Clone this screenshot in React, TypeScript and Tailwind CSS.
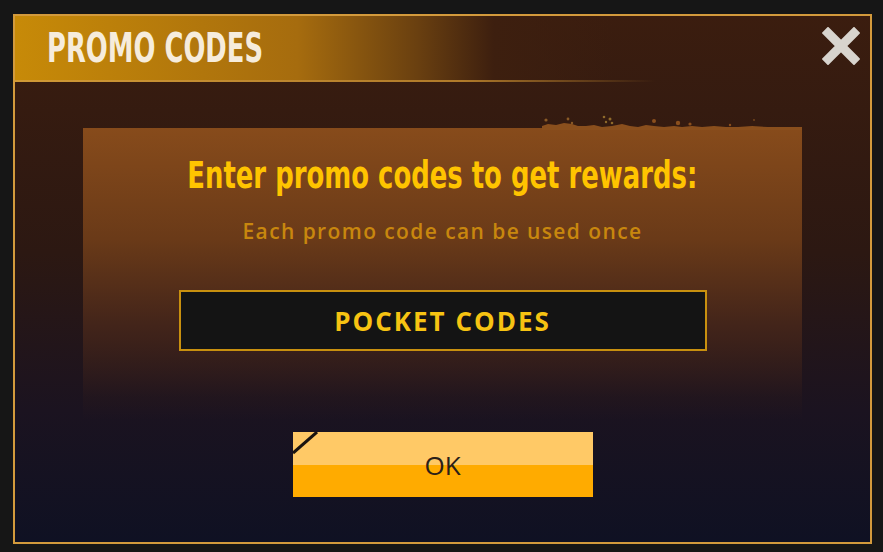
const CloseIcon = () => (
  <svg width="38" height="38" viewBox="0 0 38 38">
    <path d="M6 6 L32 32 M32 6 L6 32" stroke="#d8d4ce" strokeWidth="9" strokeLinecap="square" strokeLinejoin="round" />
  </svg>
);

const Splatter = () => (
  <svg className="absolute right-0 top-[-14px]" width="260" height="16" viewBox="0 0 260 16">
    <path
      d="M0 16 L0 12 L6 10 L14 11 L22 9 L30 10 L36 12 L44 12 L52 11 L60 13 L70 12 L80 10 L88 12 L96 13 L104 11 L112 12 L122 13 L132 12 L140 13 L150 12 L160 13 L172 12 L184 13 L196 13 L210 12 L226 13 L240 13 L260 13 L260 16 Z"
      fill="#8a4f1d"
    />
    <circle cx="4" cy="6" r="1.6" fill="#8a5a26" />
    <circle cx="26" cy="5" r="1.4" fill="#8a5a26" />
    <circle cx="30" cy="9" r="1.2" fill="#8a5a26" />
    <circle cx="62" cy="3" r="1.3" fill="#8f6a2a" />
    <circle cx="68" cy="5" r="1.5" fill="#8f6a2a" />
    <circle cx="64" cy="8" r="1.2" fill="#8f6a2a" />
    <circle cx="70" cy="9" r="1.3" fill="#8f6a2a" />
    <circle cx="112" cy="7" r="2" fill="#8a4f1d" />
    <circle cx="136" cy="9" r="2.2" fill="#8a4f1d" />
    <circle cx="148" cy="10" r="1.6" fill="#8a4f1d" />
    <circle cx="188" cy="11" r="1.2" fill="#8a4f1d" />
    <circle cx="212" cy="6" r="0.9" fill="#7a4a1d" />
  </svg>
);

export default function App() {
  return (
    <div className="w-[883px] h-[552px] bg-[#161616] pt-[14px] pl-[13px] overflow-hidden">
      <div className="w-[859px] h-[530px] border-2 border-[#d39a3c] bg-[linear-gradient(to_bottom,#3b1d0f_0%,#2c1812_45%,#1b1320_75%,#0f1123_100%)] flex flex-col">
        <div className="h-[64px] flex items-center justify-between bg-[linear-gradient(to_right,#c78a08_0%,#a66c0e_33%,#6a4010_47%,#3d1f0f_56%,transparent_70%)]">
          <h1 className="ml-[32px] inline-block origin-left scale-x-[0.63] text-[41px] font-bold text-[#f6ecdc] leading-none font-['DejaVu_Sans',sans-serif] whitespace-nowrap">
            PROMO CODES
          </h1>
          <div className="pr-[10px] mb-[4px]">
            <CloseIcon />
          </div>
        </div>
        <div className="h-[2px] w-[640px] bg-[linear-gradient(to_right,#d19a36_0%,#b07a2a_70%,transparent_100%)]" />
        <div className="relative mt-[46px] mx-[68px] h-[292px] bg-[linear-gradient(to_bottom,#874b1b_0%,#6a3a18_38%,#42241a_68%,rgba(44,26,28,0.35)_92%,transparent_100%)] flex flex-col items-center">
          <Splatter />
          <h2 className="mt-[29px] inline-block scale-x-[0.70] text-[37px] font-bold text-[#ffc400] leading-[38px] font-['DejaVu_Sans',sans-serif] whitespace-nowrap">
            Enter promo codes to get rewards:
          </h2>
          <p className="mt-[23px] text-[21px] font-semibold tracking-[1.4px] text-[#c8870e] leading-[26px] font-['Open_Sans',sans-serif]">
            Each promo code can be used once
          </p>
          <div className="mt-[46px] w-[528px] h-[61px] border-2 border-[#c8900f] bg-[#141414] flex items-center justify-center">
            <span className="text-[26px] font-bold tracking-[2px] text-[#f7c312] font-['Open_Sans',sans-serif] leading-none">
              POCKET CODES
            </span>
          </div>
        </div>
        <div className="mt-[12px] flex justify-center">
          <button className="relative w-[300px] h-[65px] bg-[linear-gradient(to_bottom,#ffc966_0%,#ffc966_51%,#ffab00_51%,#ffab00_100%)] flex items-center justify-center">
            <svg className="absolute left-0 top-0" width="26" height="26" viewBox="0 0 26 26">
              <path d="M0 21 L24 0" stroke="#1a1410" strokeWidth="3" />
            </svg>
            <span className="text-[26px] font-medium text-[#2a2018] font-['Open_Sans',sans-serif] leading-none">OK</span>
          </button>
        </div>
      </div>
    </div>
  );
}
